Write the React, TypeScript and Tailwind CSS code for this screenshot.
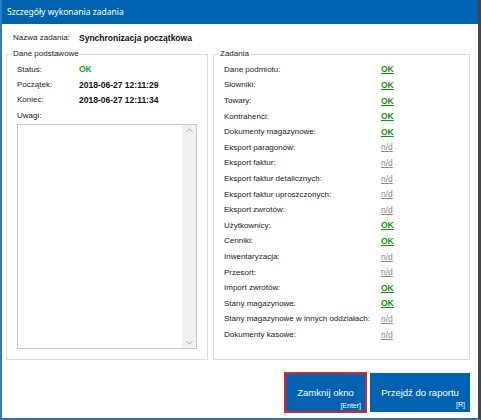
import React from "react"

const tasks: [string, boolean][] = [
  ["Dane podmiotu:", true],
  ["Słowniki:", true],
  ["Towary:", true],
  ["Kontrahenci:", true],
  ["Dokumenty magazynowe:", true],
  ["Eksport paragonów:", false],
  ["Eksport faktur:", false],
  ["Eksport faktur detalicznych:", false],
  ["Eksport faktur uproszczonych:", false],
  ["Eksport zwrotów:", false],
  ["Użytkownicy:", true],
  ["Cenniki:", true],
  ["Inwentaryzacja:", false],
  ["Przesort:", false],
  ["Import zwrotów:", true],
  ["Stany magazynowe:", true],
  ["Stany magazynowe w innych oddziałach:", false],
  ["Dokumenty kasowe:", false],
]

function InfoRow({ label, value, green }: { label: string; value: string; green?: boolean }) {
  return (
    <div className="flex items-center h-[15.3px]">
      <span className="w-[62px] text-[8px] text-[#222]">{label}</span>
      <span className={green ? "text-[8.5px] font-bold text-[#12a012]" : "text-[8.5px] font-bold text-[#111]"}>{value}</span>
    </div>
  )
}

export default function App() {
  return (
    <div
      className="w-[481px] h-[420px] bg-white flex flex-col border-l-2 border-b-2 border-r-[3px] border-l-[#2f7bc6] border-b-[#2f6fb8] border-r-[#454545] overflow-hidden"
      style={{ fontFamily: '"Liberation Sans", Arial, sans-serif' }}
    >
      {/* title bar */}
      <div className="h-[24px] shrink-0 bg-[#0063b1] flex items-center pl-[5px] text-white text-[8.5px]" style={{ fontFamily: '"Noto Sans", sans-serif' }}>
        Szczegóły wykonania zadania
      </div>

      <div className="flex flex-col pl-[4px] pr-[8px]">
        <div className="flex items-center h-[14px] mt-[7px] pl-[7px]">
          <span className="w-[66px] text-[8px] text-[#222]">Nazwa zadania:</span>
          <span className="text-[8.5px] font-bold text-[#111]">Synchronizacja początkowa</span>
        </div>

        <div className="flex gap-[5px] mt-[3px]">
          {/* left group */}
          <fieldset className="w-[202px] h-[312px] border border-[#dcdcdc] pl-[10px] pr-[10px]">
            <legend className="ml-[-5px] px-[1px] text-[8px] leading-[12px] text-[#222]">Dane podstawowe</legend>
            <div className="mt-[2px]">
              <InfoRow label="Status:" value="OK" green />
              <InfoRow label="Początek:" value="2018-06-27 12:11:29" />
              <InfoRow label="Koniec:" value="2018-06-27 12:11:34" />
              <div className="flex items-center h-[15.3px] text-[8px] text-[#222]">Uwagi:</div>
            </div>
            <div className="mt-[1px] h-[225px] border border-[#c8c8c8] flex justify-end">
              <div className="w-[14px] h-full bg-[#f0f0f0] flex flex-col justify-between items-center py-[3px]">
                <svg width="7" height="5" viewBox="0 0 7 5">
                  <path d="M0.5 4 L3.5 1 L6.5 4" fill="none" stroke="#a8a8a8" strokeWidth="1" />
                </svg>
                <svg width="7" height="5" viewBox="0 0 7 5">
                  <path d="M0.5 1 L3.5 4 L6.5 1" fill="none" stroke="#a8a8a8" strokeWidth="1" />
                </svg>
              </div>
            </div>
          </fieldset>

          {/* right group */}
          <fieldset className="w-[257px] h-[312px] border border-[#dcdcdc] pl-[10px]">
            <legend className="ml-[-5px] px-[1px] text-[8px] leading-[12px] text-[#222]">Zadania</legend>
            <div className="mt-[2px]">
              {tasks.map(([label, ok]) => (
                <div key={label} className="flex items-center h-[15.6px]">
                  <span className="w-[157px] text-[8px] text-[#222] whitespace-nowrap">{label}</span>
                  {ok ? (
                    <span className="text-[8.5px] font-bold text-[#0e960e] underline underline-offset-1">OK</span>
                  ) : (
                    <span className="text-[8.5px] text-[#8c8c8c] underline underline-offset-1">n/d</span>
                  )}
                </div>
              ))}
            </div>
          </fieldset>
        </div>

        <div className="flex justify-end gap-[3px] mt-[12px]">
          <button className="w-[83px] h-[41px] bg-[#0063b1] border-2 border-[#e0242c] flex flex-col items-center text-white pt-[13px] relative">
            <span className="text-[9.5px] leading-[12px]">Zamknij okno</span>
            <span className="self-end pr-[4px] text-[7px] leading-[9px] mt-[2px]">[Enter]</span>
          </button>
          <button className="w-[100px] h-[39px] mt-[1px] bg-[#0063b1] flex flex-col items-center text-white pt-[14px]">
            <span className="text-[9.5px] leading-[12px]">Przejdź do raportu</span>
            <span className="self-end pr-[5px] text-[7px] leading-[9px] mt-[1px]">[R]</span>
          </button>
        </div>
      </div>
    </div>
  )
}
